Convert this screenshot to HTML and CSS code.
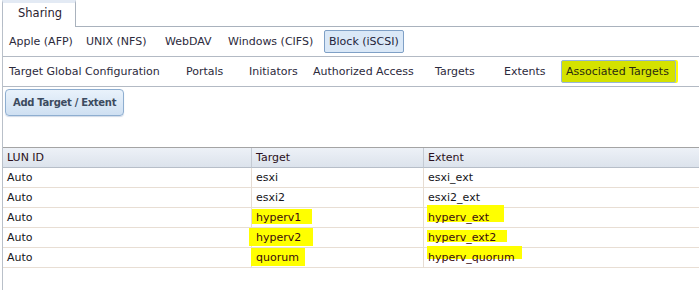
FILE: index.html
```html
<!DOCTYPE html>
<html lang="en">
<head>
	<meta charset="UTF-8">
	<title>Sharing - Block (iSCSI)</title>
	<link rel="stylesheet" href="styles.css">
</head>
<body>
	<div class="tabbar">
		<div class="tab">Sharing</div>
		<div class="tab-rest"></div>
	</div>
	<div class="panel">
		<div class="nav nav-share">
			<span class="nav-item">Apple (AFP)</span>
			<span class="nav-item">UNIX (NFS)</span>
			<span class="nav-item">WebDAV</span>
			<span class="nav-item">Windows (CIFS)</span>
			<span class="nav-btn">Block (iSCSI)</span>
		</div>
		<div class="nav nav-iscsi">
			<span class="nav-item">Target Global Configuration</span>
			<span class="nav-item">Portals</span>
			<span class="nav-item">Initiators</span>
			<span class="nav-item">Authorized Access</span>
			<span class="nav-item">Targets</span>
			<span class="nav-item">Extents</span>
			<span class="nav-btn marked">Associated Targets</span>
		</div>
		<div class="toolbar">
			<button class="add-btn">Add Target / Extent</button>
		</div>
		<table class="grid">
			<thead>
				<tr>
					<th class="c-lun">LUN ID</th>
					<th class="c-target">Target</th>
					<th>Extent</th>
				</tr>
			</thead>
			<tbody>
				<tr><td>Auto</td><td>esxi</td><td>esxi_ext</td></tr>
				<tr><td>Auto</td><td>esxi2</td><td>esxi2_ext</td></tr>
				<tr><td>Auto</td><td><span class="hl hl-t1">hyperv1</span></td><td><span class="hl hl-e1">hyperv_ext</span></td></tr>
				<tr><td>Auto</td><td><span class="hl hl-t2">hyperv2</span></td><td><span class="hl hl-e2">hyperv_ext2</span></td></tr>
				<tr><td>Auto</td><td><span class="hl hl-t3">quorum</span></td><td><span class="hl hl-e3">hyperv_quorum</span></td></tr>
			</tbody>
		</table>
	</div>
</body>
</html>
```

FILE: styles.css
```css
*{
	margin: 0;
	padding: 0;
	box-sizing: border-box;
}
html, body{
	background: #fff;
}
body{
	font: 11px "DejaVu Sans", Verdana, sans-serif;
	color: #222;
	width: 699px;
	height: 290px;
	overflow: hidden;
}

/* top tab */
.tabbar{
	display: flex;
	height: 27px;
}
.tab{
	margin-left: 2px;
	width: 74px;
	border-left: 1px solid #b4bcc7;
	border-right: 1px solid #a9b2bd;
	border-top: 3px solid #e3eaf4;
	padding-left: 15px;
	line-height: 21px;
	font-size: 11.5px;
	color: #2a2230;
}
.tab-rest{
	flex: 1;
	border-bottom: 1px solid #a9b2bd;
}

.panel{
	margin-left: 2px;
	border-left: 1px solid #b9c0c9;
	height: 263px;
}

/* sub navigation rows */
.nav{
	display: flex;
	align-items: center;
	height: 30px;
	padding-left: 6px;
	border-bottom: 1px solid #b3bac4;
	color: #2c2a3c;
	white-space: nowrap;
}
.nav-share .nav-item:nth-child(1){ width: 77px; }
.nav-share .nav-item:nth-child(2){ width: 79px; }
.nav-share .nav-item:nth-child(3){ width: 63px; }
.nav-share .nav-item:nth-child(4){ width: 96px; }

.nav-iscsi .nav-item:nth-child(1){ width: 177px; }
.nav-iscsi .nav-item:nth-child(2){ width: 63px; }
.nav-iscsi .nav-item:nth-child(3){ width: 64px; }
.nav-iscsi .nav-item:nth-child(4){ width: 122px; }
.nav-iscsi .nav-item:nth-child(5){ width: 69px; }
.nav-iscsi .nav-item:nth-child(6){ width: 57px; }

.nav-btn{
	height: 23px;
	line-height: 21px;
	padding: 0 4px;
	border: 1px solid #7fa0c6;
	border-radius: 2px;
	background: #dae8f7;
	color: #1e1e3a;
}
.nav-btn.marked{
	padding: 0 6px 0 4px;
	border-color: #98b6d8;
	background: #d4e200;
	color: #2a2a10;
	box-shadow: 2px 0 0 #ffff00;
}

/* toolbar */
.toolbar{
	height: 60px;
	padding: 2px 0 0 2px;
}
.add-btn{
	height: 27px;
	padding: 0 7px;
	font: bold 10px "DejaVu Sans", Verdana, sans-serif;
	letter-spacing: -0.3px;
	color: #3c4b60;
	border: 1px solid #8eaed0;
	border-radius: 4px;
	background: linear-gradient(#e9f2fb, #cfe0f2);
	box-shadow: 0 1px 1px rgba(120, 150, 190, 0.35);
}

/* grid */
.grid{
	width: 696px;
	table-layout: fixed;
	border-collapse: separate;
	border-spacing: 0;
	border-top: 1px solid #a4a4a4;
}
.grid th, .grid td{
	padding-left: 4px;
	text-align: left;
	white-space: nowrap;
	height: 20px;
}
.grid th{
	font-weight: normal;
	height: 20px;
	color: #2a1020;
	background: linear-gradient(#edf1f7, #dce3ec);
	border-bottom: 1px solid #b7bec8;
	border-right: 1px solid #c4cad3;
}
.grid th:last-child{
	border-right: none;
}
.grid th.c-lun{ width: 249px; }
.grid th.c-target{ width: 172px; }
.grid td{
	color: #151520;
	border-bottom: 1px solid #e8ded4;
	border-right: 1px solid #e6dcd2;
}
.grid td:last-child{
	border-right: none;
}

/* hand drawn highlights */
.hl{
	position: relative;
	isolation: isolate;
	color: #3a0a10;
}
.hl::before{
	content: "";
	position: absolute;
	z-index: -1;
	background: #ffff00;
	left: -4px;
	right: -11px;
	top: -2px;
	bottom: 0;
}
.hl-t2::before{ left: -7px; right: -12px; top: -3px; bottom: -2px; }
.hl-t3::before{ left: -5px; right: -6px; top: -3px; bottom: -2px; }
.hl-e1::before{ left: -1px; right: -15px; top: -6px; bottom: 2px; }
.hl-e2::before{ left: -1px; right: -11px; top: -1px; bottom: 2px; }
.hl-e3::before{ left: -1px; right: -7px; top: -5px; bottom: 5px; }
```
